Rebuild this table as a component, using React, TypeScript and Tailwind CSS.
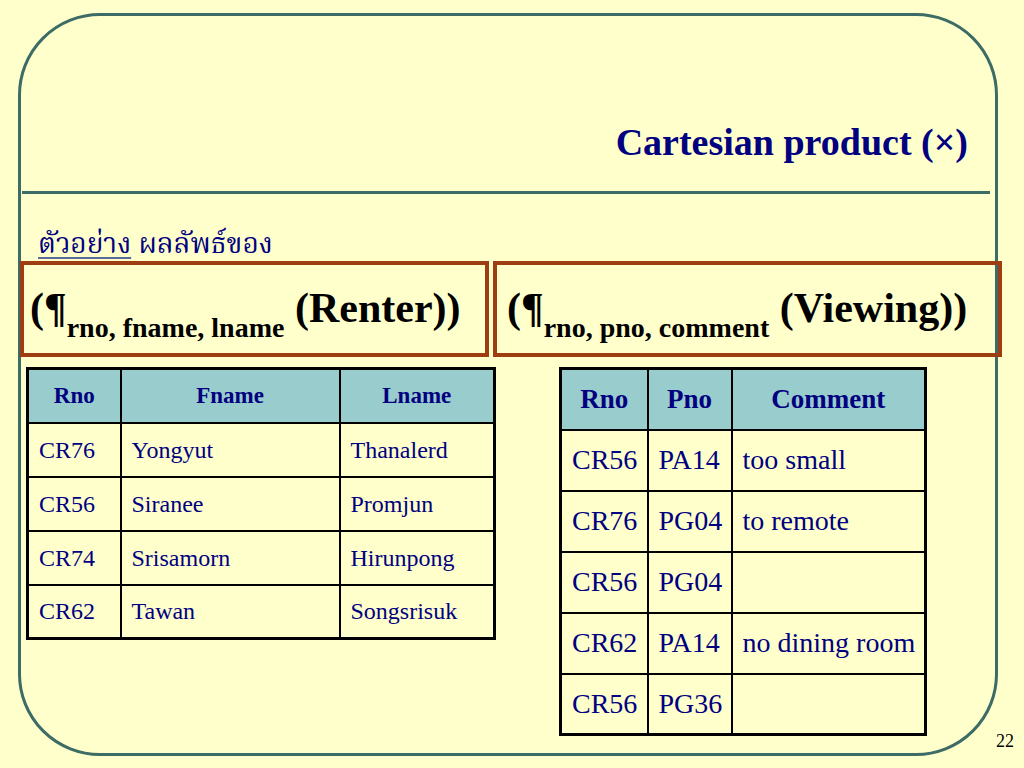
const SERIF = { fontFamily: '"Liberation Serif", "Times New Roman", serif' };

type Col = { label: string; width: string };

const RENTER_COLS: Col[] = [
  { label: 'Rno', width: 'w-[93px]' },
  { label: 'Fname', width: 'w-[219px]' },
  { label: 'Lname', width: 'w-[155px]' },
];

const RENTER_ROWS = [
  ['CR76', 'Yongyut', 'Thanalerd'],
  ['CR56', 'Siranee', 'Promjun'],
  ['CR74', 'Srisamorn', 'Hirunpong'],
  ['CR62', 'Tawan', 'Songsrisuk'],
];

const VIEWING_COLS: Col[] = [
  { label: 'Rno', width: 'w-[87px]' },
  { label: 'Pno', width: 'w-[84px]' },
  { label: 'Comment', width: 'w-[194px]' },
];

const VIEWING_ROWS = [
  ['CR56', 'PA14', 'too small'],
  ['CR76', 'PG04', 'to remote'],
  ['CR56', 'PG04', ''],
  ['CR62', 'PA14', 'no dining room'],
  ['CR56', 'PG36', ''],
];

function Projection({ attrs, rel, pad }: { attrs: string; rel: string; pad: string }) {
  return (
    <div className={`h-[96px] border-4 border-[#9e3c12] font-bold text-[42px] leading-none text-black whitespace-nowrap pt-[22px] ${pad}`}>
      (¶<span className="text-[28px] align-[-15px]">{attrs}</span> ({rel}))
    </div>
  );
}

function DataTable({
  cols,
  rows,
  rowH,
  headSize,
  bodySize,
}: {
  cols: Col[];
  rows: string[][];
  rowH: string;
  headSize: string;
  bodySize: string;
}) {
  return (
    <table className="border-collapse border-[3px] border-black table-fixed">
      <thead>
        <tr className="bg-[#99cccc]">
          {cols.map((c) => (
            <th key={c.label} className={`${c.width} ${rowH} border-2 border-black text-center font-bold text-[#000080] ${headSize} leading-none p-0`}>
              {c.label}
            </th>
          ))}
        </tr>
      </thead>
      <tbody>
        {rows.map((r, i) => (
          <tr key={i}>
            {r.map((cell, j) => (
              <td key={j} className={`${rowH} border-2 border-black text-left text-[#000080] ${bodySize} leading-none pl-[10px] pr-0 py-0 whitespace-nowrap`}>
                {cell}
              </td>
            ))}
          </tr>
        ))}
      </tbody>
    </table>
  );
}

export default function App() {
  return (
    <div className="w-[1024px] h-[768px] bg-[#ffffcc] flex items-start pt-[13px] pl-[18px] overflow-hidden" style={SERIF}>
      <div className="w-[980px] h-[743px] shrink-0 border-[3px] border-[#3d6b66] rounded-[82px] flex flex-col">
        <div className="mt-[107px] pr-[27px] text-right text-[38px] leading-none font-bold text-[#000080]">
          Cartesian product (×)
        </div>
        <div className="mt-[30px] ml-px w-[968px] h-[3px] bg-[#3d6b66]" />

        <div
          className="mt-[38px] pl-[17px] text-[28px] leading-none text-[#000080]"
          style={{ fontFamily: '"Noto Serif Thai", "Noto Sans Thai", "Noto Sans", "Liberation Serif", serif' }}
        >
          <span className="underline decoration-[#5a6a9a] underline-offset-4">ตัวอย่าง</span> ผลลัพธ์ของ
        </div>

        <div className="mt-[1px] -ml-px flex gap-[4px] items-start">
          <div className="w-[469px] shrink-0">
            <Projection attrs="rno, fname, lname" rel="Renter" pad="pl-[6px]" />
          </div>
          <div className="w-[509px] shrink-0">
            <Projection attrs="rno, pno, comment" rel="Viewing" pad="pl-[10px]" />
          </div>
        </div>

        <div className="mt-[10px] ml-[5px] flex items-start gap-[63px]">
          <DataTable cols={RENTER_COLS} rows={RENTER_ROWS} rowH="h-[54px]" headSize="text-[23px]" bodySize="text-[24px]" />
          <DataTable cols={VIEWING_COLS} rows={VIEWING_ROWS} rowH="h-[61px]" headSize="text-[27px]" bodySize="text-[28px]" />
        </div>
      </div>
      <div className="mt-[719px] -ml-[2px] text-[18px] leading-none text-black">22</div>
    </div>
  );
}
